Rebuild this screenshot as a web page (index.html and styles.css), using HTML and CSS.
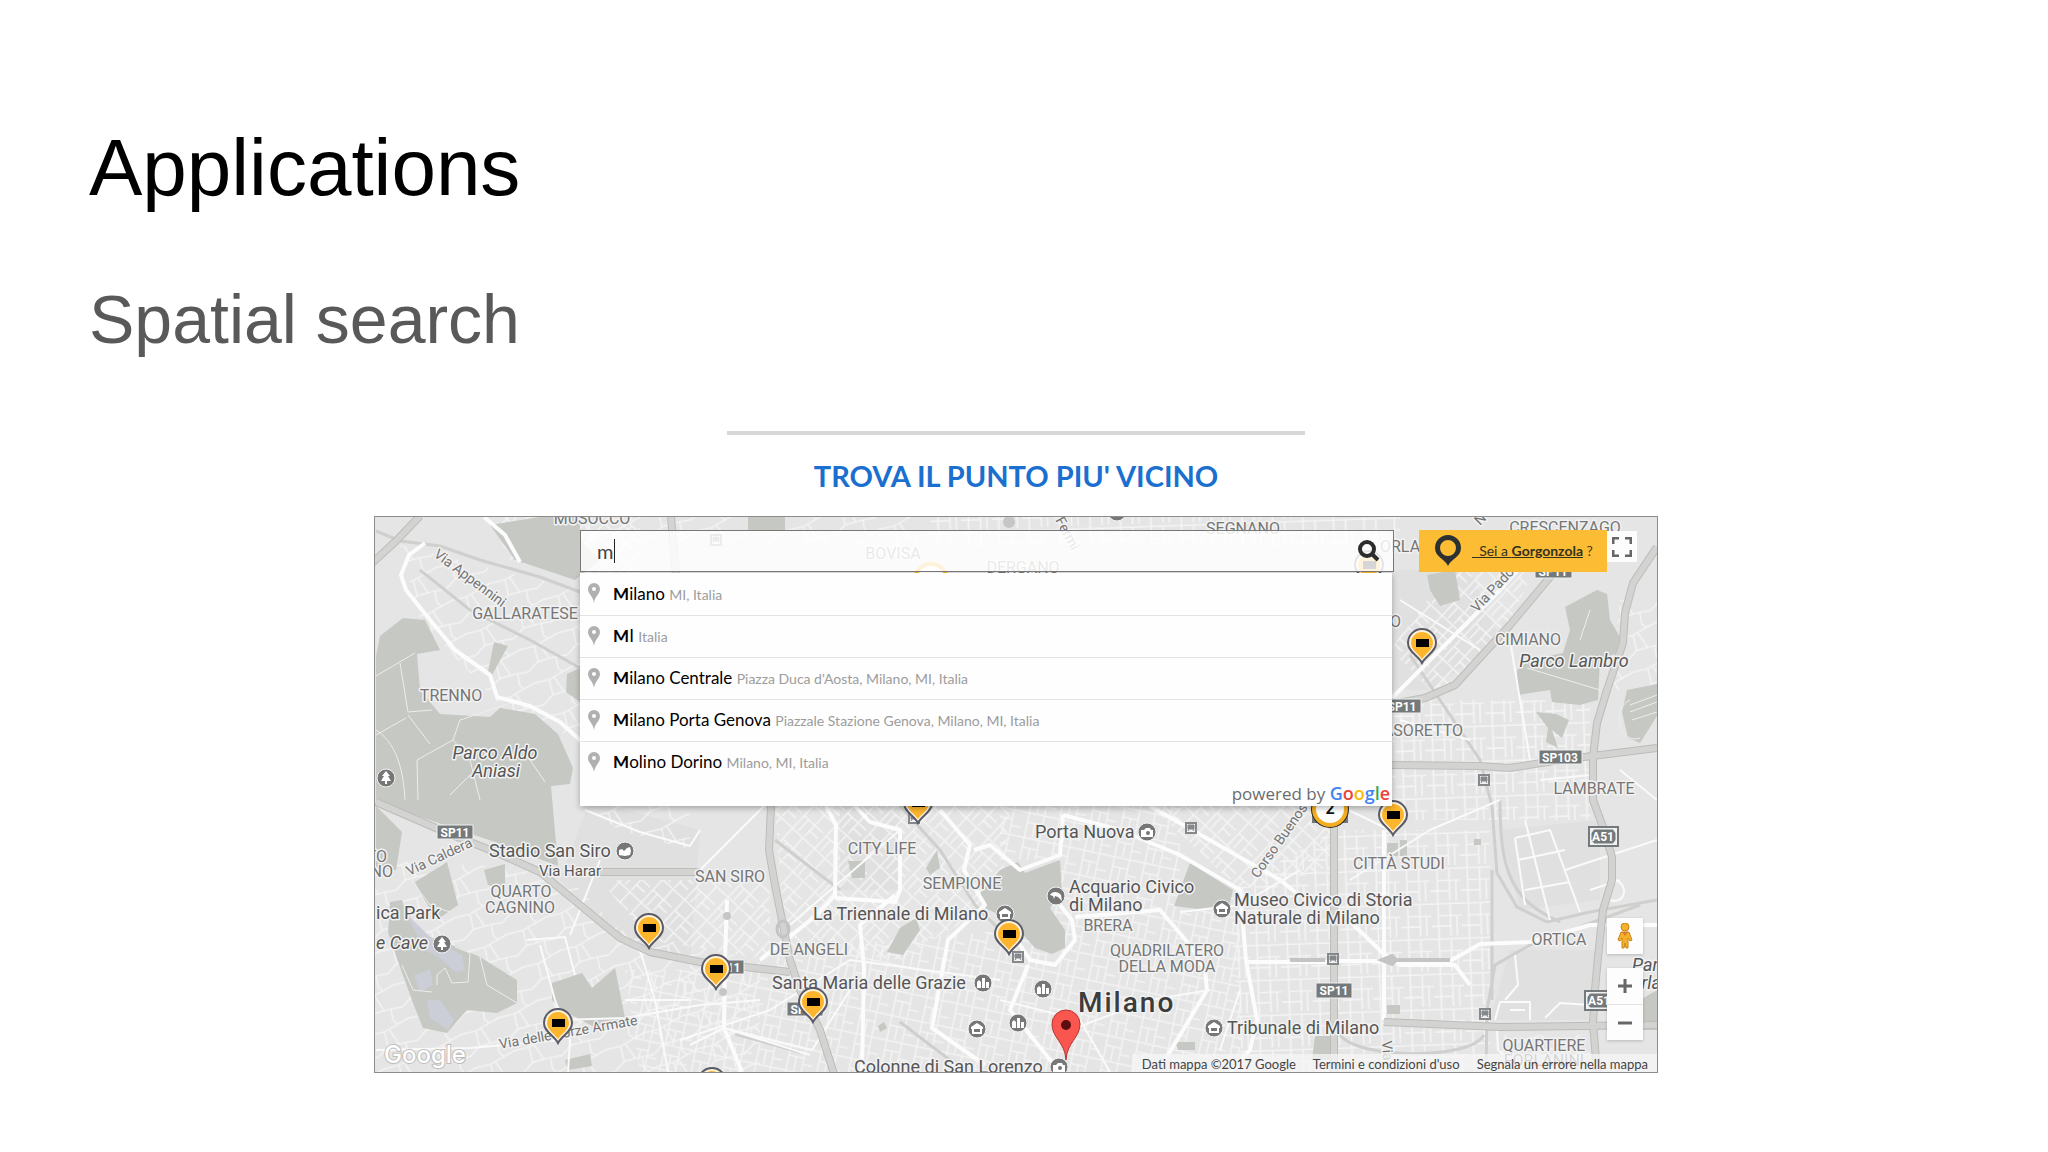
FILE: index.html
```html
<!DOCTYPE html>
<html lang="en">
<head>
<meta charset="utf-8">
<meta name="viewport" content="width=device-width, initial-scale=1">
<title>Applications – Spatial search</title>
<link rel="stylesheet" href="styles.css">
</head>
<body>
<main class="slide">
  <h1 class="title">Applications</h1>
  <h2 class="subtitle">Spatial search</h2>

  <section class="finder" lang="it">
    <hr class="rule">
    <h3 class="finder-title">TROVA IL PUNTO PIU' VICINO</h3>

    <div class="map">
      <svg class="map-canvas" viewBox="375 517 1282 555" preserveAspectRatio="xMidYMid slice" role="img" aria-label="Mappa di Milano">
        <defs>
          <pattern id="grid-a" width="44" height="36" patternUnits="userSpaceOnUse" patternTransform="rotate(12) scale(.7)">
            <path class="street" d="M0 2H44M8 0V36M8 16H30M30 2V36M30 25H44M19 16V36"/>
          </pattern>
          <pattern id="grid-b" width="40" height="42" patternUnits="userSpaceOnUse" patternTransform="rotate(43) scale(.75)">
            <path class="street" d="M0 3H40M6 0V42M6 22H40M25 3V42M14 22V42M25 32H40"/>
          </pattern>
          <pattern id="grid-c" width="38" height="44" patternUnits="userSpaceOnUse" patternTransform="rotate(-2) scale(.8)">
            <path class="street" d="M0 4H38M9 0V44M9 19H38M24 4V44M0 32H24M32 19V44"/>
          </pattern>
          <pattern id="grid-d" width="60" height="52" patternUnits="userSpaceOnUse" patternTransform="rotate(-24) scale(.7)">
            <path class="street" d="M0 6L22 10L60 6M22 10L18 32L0 40M18 32L44 36L60 40M44 36L40 52M40 0L44 8M30 10L34 34"/>
          </pattern>
          <g id="pin">
            <path class="pin-edge" d="M0 20C-4 12-14 9-14 0A14 14 0 0 1 14 0C14 9 4 12 0 20Z"/>
            <path class="pin-body" d="M0 16C-4 10-11 7-11 0A11 11 0 0 1 11 0C11 7 4 10 0 16Z"/>
            <path d="M-6-4H7V4H-6Z"/>
          </g>
          <g id="poi"><circle class="poi-disc" r="9"/></g>
          <g id="poi-camera"><use href="#poi"/><path class="poi-mark" d="M-6-2H-3L-1-4H3L4-2H6V5H-6Z"/><circle class="poi-hole" cx="1" cy="1" r="2"/></g>
          <g id="poi-museum"><use href="#poi"/><path class="poi-mark" d="M-6-2L0-6L6-2V0H5V5H-5V0H-6Z"/><path class="poi-hole" d="M-3 0H3V3H-3Z"/></g>
          <g id="poi-city"><use href="#poi"/><path class="poi-mark" d="M-6 5V-1L-4-3L-2-1V5ZM-1 5V-5H2V5ZM3 5V-1H6V5Z"/></g>
          <g id="poi-tree"><use href="#poi"/><path class="poi-mark" d="M0-7L4-2H2L5 3H1V6H-1V3H-5L-2-2H-4Z"/></g>
          <g id="poi-fish"><use href="#poi"/><path class="poi-mark" d="M-6-1C-4-5 2-5 5-1L6 5L2 1L-1 0L-2 3L-3 0Z"/></g>
          <g id="poi-stadium"><use href="#poi"/><path class="poi-mark" d="M-6 4V-1L-3-2L-1 0L2-3L5-4L6 0L5 4L0 5Z"/></g>
          <g id="rail"><path class="rail-box" d="M-5-5H5V5H-5Z"/><path class="rail-mark" d="M-3-3H3V1H-3ZM-3 3L-2 1M3 3L2 1"/></g>
        </defs>

        <path class="land" d="M375 517H1657V1072H375Z"/>

        <g class="blocks">
          <path d="M590 800L700 830L690 960L620 940L560 880Z"/>
          <path d="M1500 830L1600 820L1600 900L1520 910Z"/>
          <path d="M1510 950H1595V1020H1490Z"/>
          <path d="M840 807H900V890H840Z"/>
          <path d="M1380 570H1470L1500 640L1430 690H1380Z"/>
        </g>

        <!-- minor streets -->
        <path fill="url(#grid-d)" d="M400 545L580 590V740L500 705L420 620Z M375 860L560 870L620 930L760 960V1072H375Z M580 517H930V545H580Z"/>
        <path fill="url(#grid-b)" d="M490 517H640V590L560 575L510 560Z M600 880H770V960L650 940Z M775 806H1010L1000 900L900 960L785 950Z M1150 806H1330V870L1240 890Z M1390 650L1450 570L1540 560L1500 640L1440 700Z"/>
        <path fill="url(#grid-c)" d="M1230 890L1334 830H1490V1072H1240Z M1392 700H1590V820H1392Z M930 517H1400V545H930Z"/>
        <path fill="url(#grid-a)" d="M770 950L1010 930L1060 860L1180 806V1072H830Z M625 970H790L830 1072H640Z M1180 910H1240V1072H1180Z M1000 806H1180V860H1000Z"/>
        <path fill="url(#grid-d)" d="M1620 600H1657V690H1610Z M1500 1035H1590V1072H1500Z M580 806H690V850L620 830Z"/>

        <!-- parks -->
        <g class="park">
          <path d="M376 656L380 636L403 618L425 620L440 650L417 654L420 690L440 714L490 717L500 708L535 714L558 734L573 768L570 784L551 786L558 866L495 842L376 802Z"/>
          <path d="M376 806L402 832L396 870L376 868Z"/>
          <path d="M494 642L508 646L492 675L488 672Z"/>
          <path d="M567 674L580 668V702L566 692Z"/>
          <path d="M540 517H580V540L600 560L575 580L515 560L490 525Z"/>
          <path d="M484 870L505 864V890L488 885Z"/>
          <path d="M415 882L447 862L458 905L437 920L422 896Z"/>
          <path d="M390 902L402 900L407 917L430 937L457 947L480 957L517 980V1003L497 1013L467 1010L447 1033L423 1028L413 1003L400 967L388 932Z"/>
          <path d="M552 983L582 973L592 988L615 968L625 1018L600 1030L562 1010L552 1000Z"/>
          <path d="M565 1060L590 1054L592 1066L568 1070Z"/>
          <path d="M748 517H785V530H748Z"/>
          <path d="M848 861H865V878H852Z"/>
          <path d="M937 850L940 868L930 875L926 868Z"/>
          <path d="M916 918L920 930L903 955L887 952L900 928Z"/>
          <path d="M978 896L1000 870L1018 862L1025 873L1060 860L1062 893L1050 908L1065 930V948L1052 954L1035 948L1010 920L985 908Z"/>
          <path d="M1190 863L1233 890L1230 903L1205 910L1174 906Z"/>
          <path d="M878 1026L884 1022L887 1028L880 1032ZM1175 1042H1195V1050H1178ZM1315 1036H1336V1060H1312Z"/>
          <path d="M1387 843H1398V856H1387ZM1400 840H1407V856H1400ZM1474 839H1481V845H1474ZM1387 1005H1400V1014H1387Z"/>
          <path d="M1427 575L1455 570L1460 600L1440 606L1430 590Z"/>
          <path d="M1597 590L1607 594L1610 620L1620 637L1617 653L1600 660L1598 700L1580 705L1552 702L1550 690L1518 695L1517 670L1530 660L1563 653L1570 630L1565 607Z"/>
          <path d="M1536 712L1556 714L1569 720L1562 738L1552 730L1558 748L1546 742L1548 728Z"/>
          <path d="M1627 690L1657 684V716L1640 743L1628 738L1622 712Z"/>
          <path d="M1640 1000L1657 990V1030H1640Z"/>
        </g>
        <g class="water">
          <path d="M405 912L430 937L462 955L465 970L455 972L440 958L425 950Z"/>
          <path d="M414 975L430 970L433 985L420 992ZM427 1000L440 1000L454 1020L448 1030L430 1018Z"/>
        </g>
        <path class="trail" d="M376 676L403 660L415 653M400 663L408 712L432 710M406 718L376 735M408 715L430 744M418 800L417 760L453 740L460 720L520 700M453 740L470 760L480 800M376 730C400 745 404 780 405 800M530 760L545 782M450 795L470 775M402 868L430 905L450 912M455 947L470 953L468 982L452 983L445 968L437 975V985M480 957L487 985L517 1003M402 965L413 990L432 992M1590 610L1580 640M1527 668L1600 690"/>
        <path class="trail" d="M1630 705L1657 695M1630 712L1657 702M1632 720L1657 712M1630 700A16 20 0 0 0 1640 738"/>

        <!-- railways -->
        <g class="railway">
          <path d="M376 531L400 541L440 546L480 560L540 577L580 592"/>
          <path d="M420 570L470 610L530 640L580 668"/>
          <path d="M1492 806L1497 873L1517 907L1547 922L1590 912L1657 900"/>
          <path d="M1500 800C1500 870 1510 900 1560 922M1640 905L1530 945L1495 965L1487 1010L1486 1072"/>
          <path d="M1410 655L1440 700L1480 760L1492 806M1492 870V1000"/>
          <path d="M900 806L940 850L975 905L1010 940M775 840L840 890M1340 1035C1360 1060 1470 1060 1484 1035"/>
          <path d="M900 1022L930 1045L950 1060M735 1034L800 1052M1188 860L1235 888"/>
        </g>

        <!-- avenues -->
        <g class="avenue">
          <path d="M425 543L409 555L401 575L406 590L430 620L455 650L490 675L497 697L530 706L560 722L582 742"/>
          <path d="M484 517L505 535L520 562"/>
          <path d="M826 806L836 825L835 895L817 915L760 960"/>
          <path d="M835 898L895 902L900 890V830L870 822L855 806"/>
          <path d="M895 895L860 925L864 968L862 1072"/>
          <path d="M727 900L725 960L724 1028L742 1072"/>
          <path d="M940 810L970 845L964 870L985 905L948 940L932 1028L985 1065"/>
          <path d="M974 850L990 845L1020 870L1060 855L1063 815"/>
          <path d="M1010 930L1030 960L1055 965L1075 940L1072 920L1060 905"/>
          <path d="M1063 815L1120 830L1180 855L1240 890L1246 960L1257 1020L1250 1050L1230 1072"/>
          <path d="M1150 806L1280 880L1300 896"/>
          <path d="M1075 917L1160 910L1190 945L1205 970L1207 990L1165 1060"/>
          <path d="M1028 965L1010 1010L1060 1072"/>
          <path d="M1384 830V1020"/>
          <path d="M1248 962H1330M1338 961H1450L1480 944L1530 942L1590 925H1657"/>
          <path d="M1338 910L1385 955L1400 965L1455 965L1470 985"/>
          <path d="M1392 698L1440 650L1500 590L1540 545"/>
        </g>
        <g class="lane">
          <path d="M1350 880L1430 830L1500 800"/>
          <path d="M1565 870L1657 840M1525 820L1550 920M1515 838L1550 830L1580 912M1340 806L1390 830M1515 838L1525 905M1518 860L1565 850M1525 890L1570 882"/>
          <path d="M1495 1020L1500 1002H1530V1020M1510 1010H1525M1545 1018L1560 1003L1590 1005M1515 955L1518 985L1505 1000M1590 890L1620 880M1615 880C1630 885 1625 905 1610 900"/>
          <path d="M540 945L555 1000L570 1040L568 1072M527 940L565 937L575 975M640 950L655 1000L668 1072M600 860L570 935M560 1020L625 1018L700 1005L760 1000"/>
          <path d="M625 1000H690M376 1050L470 1048L560 1040M680 1040L770 1010L850 960L1000 980"/>
          <path d="M730 1030L810 1055M690 1045L724 1028L812 1050L850 990"/>
          <path d="M1497 1030L1498 1050L1510 1060"/>
          <path d="M585 810L640 832L690 846L700 830M700 870L770 800M790 925L900 830M1180 912L1240 905L1300 870"/>
          <path d="M1220 1050L1240 990M1070 1030L1150 1000L1210 990M1000 1000L1080 1020L1110 1072"/>
          <path d="M1620 770L1657 800M1540 780L1590 775M1400 720L1470 740M1510 640L1530 760M1400 600L1480 650"/>
        </g>
        <path class="plaza" d="M1395 960H1450M1382 960L1392 956L1396 960L1392 964ZM1290 960H1325"/>

        <!-- main roads -->
        <g class="road-edge">
          <path id="r1" d="M420 516L396 541L370 565"/>
          <path id="r2" d="M376 802L445 832L500 854L540 872L580 905L620 938L650 952L700 962L790 972"/>
          <path id="r3" d="M771 806L769 850L775 885L783 925L790 960L800 990L820 1030L834 1074"/>
          <path id="r4" d="M1657 547L1633 583L1625 613L1623 643L1607 690L1597 723L1593 757V800L1603 827L1612 857V880L1603 910L1598 957L1595 990L1593 1023L1597 1072"/>
          <path id="r5" d="M1580 545L1560 565L1510 625L1455 685L1425 698L1392 704"/>
          <path id="r6" d="M1392 765L1480 766L1510 768L1560 760L1657 748"/>
          <path id="r7" d="M1334 800V1072"/>
          <path id="r8" d="M1384 1022L1500 1027L1657 1025"/>
          <path id="r9" d="M590 872H700M671 517L676 575"/>
        </g>
        <g class="road">
          <use href="#r1"/><use href="#r2"/><use href="#r3"/><use href="#r4"/><use href="#r5"/><use href="#r6"/><use href="#r7"/><use href="#r8"/><use href="#r9"/>
        </g>
        <ellipse class="ring" cx="783" cy="929" rx="6" ry="8"/>
        <g class="knot"><circle cx="727" cy="916" r="4"/><circle cx="723" cy="992" r="4"/><circle cx="1009" cy="522" r="6"/></g>

        <!-- district names -->
        <g class="label district">
          <text x="592" y="524" text-anchor="middle">MUSOCCO</text>
          <text x="525" y="619" text-anchor="middle">GALLARATESE</text>
          <text x="451" y="701" text-anchor="middle">TRENNO</text>
          <text x="893" y="559" text-anchor="middle">BOVISA</text>
          <text x="1023" y="573" text-anchor="middle">DERGANO</text>
          <text x="1243" y="534" text-anchor="middle">SEGNANO</text>
          <text x="1565" y="533" text-anchor="middle">CRESCENZAGO</text>
          <text x="1380" y="552">ORLA</text>
          <text x="1390" y="627">O</text>
          <text x="1528" y="645" text-anchor="middle">CIMIANO</text>
          <text x="1463" y="736" text-anchor="end">CASORETTO</text>
          <text x="1594" y="794" text-anchor="middle">LAMBRATE</text>
          <text x="1399" y="869" text-anchor="middle">CITTÀ STUDI</text>
          <text x="1559" y="945" text-anchor="middle">ORTICA</text>
          <text x="1544" y="1051" text-anchor="middle">QUARTIERE</text>
          <text x="1544" y="1066" text-anchor="middle">FORLANINI</text>
          <text x="387" y="862" text-anchor="end">TO</text>
          <text x="393" y="877" text-anchor="end">NO</text>
          <text x="521" y="897" text-anchor="middle">QUARTO</text>
          <text x="520" y="913" text-anchor="middle">CAGNINO</text>
          <text x="730" y="882" text-anchor="middle">SAN SIRO</text>
          <text x="882" y="854" text-anchor="middle">CITY LIFE</text>
          <text x="962" y="889" text-anchor="middle">SEMPIONE</text>
          <text x="809" y="955" text-anchor="middle">DE ANGELI</text>
          <text x="1108" y="931" text-anchor="middle">BRERA</text>
          <text x="1167" y="956" text-anchor="middle">QUADRILATERO</text>
          <text x="1167" y="972" text-anchor="middle">DELLA MODA</text>
        </g>
        <g class="label street-name">
          <text transform="translate(433 556) rotate(37)">Via Appennini</text>
          <text transform="translate(409 876) rotate(-25)">Via Caldera</text>
          <text transform="translate(500 1049) rotate(-10)">Via delle Forze Armate</text>
          <text transform="translate(1477 613) rotate(-47)">Via Padova</text>
          <text transform="translate(1258 879) rotate(-55)">Corso Buenos Aires</text>
          <text transform="translate(1055 520) rotate(62)">Fermi</text>
          <text transform="translate(1382 1041) rotate(86)">Via</text>
          <text transform="translate(1480 526) rotate(-45)">N</text>
        </g>
        <g class="label place">
          <text x="489" y="857">Stadio San Siro</text>
          <text x="376" y="919">ica Park</text>
          <text class="natural" x="376" y="949">e Cave</text>
          <text x="813" y="920">La Triennale di Milano</text>
          <text x="772" y="989">Santa Maria delle Grazie</text>
          <text x="854" y="1073">Colonne di San Lorenzo</text>
          <text x="1035" y="838">Porta Nuova</text>
          <text x="1069" y="893">Acquario Civico</text>
          <text x="1069" y="911">di Milano</text>
          <text x="1234" y="906">Museo Civico di Storia</text>
          <text x="1234" y="924">Naturale di Milano</text>
          <text x="1227" y="1034">Tribunale di Milano</text>
          <text class="natural" x="495" y="759" text-anchor="middle">Parco Aldo</text>
          <text class="natural" x="496" y="777" text-anchor="middle">Aniasi</text>
          <text class="natural" x="1574" y="667" text-anchor="middle">Parco Lambro</text>
          <text class="natural" x="1632" y="971">Parco</text>
          <text class="natural" x="1622" y="989">Forlanini</text>
          <text class="small" x="539" y="876">Via Harar</text>
        </g>
        <text class="label city" x="1078" y="1012">Milano</text>

        <!-- road shields -->
        <g class="shield">
          <path d="M437 825H473V839H437ZM1387 699H1421V713H1387ZM1539 750H1582V764H1539ZM1535 564H1572V578H1535ZM1316 983H1352V998H1316ZM712 960H744V974H712ZM787 1002H823V1016H787Z"/>
          <path class="shield-motorway" d="M1589 827H1618V846H1589ZM1585 991H1614V1010H1585Z"/>
          <path d="M1594 829H1613L1616 833V840L1613 844H1594L1591 840V833ZM1590 993H1609L1612 997V1004L1609 1008H1590L1587 1004V997Z"/>
        </g>
        <g class="shield-text">
          <text x="455" y="837">SP11</text>
          <text x="1402" y="711">SP11</text>
          <text x="1560" y="762">SP103</text>
          <text x="1553" y="576">SP11</text>
          <text x="1334" y="995">SP11</text>
          <text x="726" y="972">SP11</text>
          <text x="805" y="1014">SP11</text>
          <text x="1603" y="841">A51</text>
          <text x="1599" y="1005">A51</text>
        </g>

        <!-- points of interest -->
        <use href="#poi-stadium" x="625" y="851"/>
        <use href="#poi-tree" x="386" y="778"/>
        <use href="#poi-tree" x="442" y="944"/>
        <use href="#poi-museum" x="1005" y="914"/>
        <use href="#poi-city" x="983" y="983"/>
        <use href="#poi-museum" x="977" y="1029"/>
        <use href="#poi-city" x="1018" y="1023"/>
        <use href="#poi-city" x="1043" y="989"/>
        <use href="#poi-camera" x="1059" y="1067"/>
        <use href="#poi-camera" x="1147" y="832"/>
        <use href="#poi-fish" x="1056" y="896"/>
        <use href="#poi-museum" x="1222" y="909"/>
        <use href="#poi-museum" x="1214" y="1028"/>
        <use href="#poi" x="1117" y="512"/>
        <use href="#rail" x="1191" y="828"/>
        <use href="#rail" x="1018" y="957"/>
        <use href="#rail" x="1333" y="959"/>
        <use href="#rail" x="1484" y="780"/>
        <use href="#rail" x="1485" y="1014"/>
        <use href="#rail" x="716" y="540"/>
        <use href="#rail" x="914" y="818"/>

        <!-- shop markers -->
        <circle class="cluster" cx="931" cy="580" r="16"/>
        <use href="#pin" x="1369" y="565"/>
        <use href="#pin" x="1422" y="643"/>
        <use href="#pin" x="649" y="928"/>
        <use href="#pin" x="558" y="1023"/>
        <use href="#pin" x="716" y="969"/>
        <use href="#pin" x="813" y="1002"/>
        <use href="#pin" x="918" y="803"/>
        <use href="#pin" x="1009" y="934"/>
        <use href="#pin" x="1393" y="815"/>
        <use href="#pin" x="712" y="1082"/>
        <path class="cluster-base" d="M1312 800H1348V823H1312Z"/>
        <circle class="cluster-edge" cx="1330" cy="809" r="19"/>
        <circle class="cluster" cx="1330" cy="809" r="16"/>
        <text class="cluster-count" x="1330" y="814">2</text>

        <!-- search location -->
        <path class="here" d="M1066 1060C1065 1042 1052 1038 1052 1024A14 14 0 0 1 1080 1024C1080 1038 1067 1042 1066 1060Z"/>
        <circle class="here-dot" cx="1066" cy="1025" r="5"/>

        <text class="watermark" x="384" y="1063">Google</text>
      </svg>

      <form class="search">
        <div class="search-box">
          <input class="search-input" type="text" value="m" aria-label="Cerca una località" autocomplete="off">
          <span class="caret"></span>
          <button class="search-button" type="button" aria-label="Cerca">
            <svg viewBox="0 0 22 22" width="22" height="22"><circle cx="9" cy="9" r="7"/><path d="M14 14L20 20"/></svg>
          </button>
        </div>
        <div class="suggestions">
          <ul class="suggestion-list">
            <li class="suggestion"><svg class="place-pin" viewBox="0 0 12 20"><path d="M6 20C5 13 0 11 0 6A6 6 0 0 1 12 6C12 11 7 13 6 20ZM6 4A2 2 0 0 0 6 8A2 2 0 0 0 6 4Z"/></svg><span><b>M</b>ilano <small>MI, Italia</small></span></li>
            <li class="suggestion"><svg class="place-pin" viewBox="0 0 12 20"><path d="M6 20C5 13 0 11 0 6A6 6 0 0 1 12 6C12 11 7 13 6 20ZM6 4A2 2 0 0 0 6 8A2 2 0 0 0 6 4Z"/></svg><span><b>M</b>I <small>Italia</small></span></li>
            <li class="suggestion"><svg class="place-pin" viewBox="0 0 12 20"><path d="M6 20C5 13 0 11 0 6A6 6 0 0 1 12 6C12 11 7 13 6 20ZM6 4A2 2 0 0 0 6 8A2 2 0 0 0 6 4Z"/></svg><span><b>M</b>ilano Centrale <small>Piazza Duca d'Aosta, Milano, MI, Italia</small></span></li>
            <li class="suggestion"><svg class="place-pin" viewBox="0 0 12 20"><path d="M6 20C5 13 0 11 0 6A6 6 0 0 1 12 6C12 11 7 13 6 20ZM6 4A2 2 0 0 0 6 8A2 2 0 0 0 6 4Z"/></svg><span><b>M</b>ilano Porta Genova <small>Piazzale Stazione Genova, Milano, MI, Italia</small></span></li>
            <li class="suggestion"><svg class="place-pin" viewBox="0 0 12 20"><path d="M6 20C5 13 0 11 0 6A6 6 0 0 1 12 6C12 11 7 13 6 20ZM6 4A2 2 0 0 0 6 8A2 2 0 0 0 6 4Z"/></svg><span><b>M</b>olino Dorino <small>Milano, MI, Italia</small></span></li>
          </ul>
          <div class="powered">powered by <span class="google"><i class="blue">G</i><i class="red">o</i><i class="yellow">o</i><i class="blue">g</i><i class="green">l</i><i class="red">e</i></span></div>
        </div>
      </form>

      <div class="locate">
        <svg class="locate-pin" viewBox="0 0 26 32" width="26" height="32"><path d="M13 31C10 24 0 22 0 13A13 13 0 0 1 26 13C26 22 16 24 13 31ZM13 5A8 8 0 0 0 13 21A8 8 0 0 0 13 5Z"/></svg>
        <span><a href="#">&nbsp;&nbsp;Sei a <b>Gorgonzola</b></a> ?</span>
      </div>
      <button class="control fullscreen" type="button" aria-label="Schermo intero">
        <svg viewBox="0 0 20 20" width="20" height="20"><path d="M1 7V1H7M13 1H19V7M19 13V19H13M7 19H1V13"/></svg>
      </button>

      <div class="controls">
        <button class="control pegman" type="button" aria-label="Street View">
          <svg viewBox="0 0 16 26" width="16" height="26"><circle cx="8" cy="4" r="4"/><path d="M4 9H12L15 17L13 18L11 15V25H9L8 20L7 25H5V15L3 18L1 17Z"/><path class="scarf" d="M5 9H11L8 13Z"/></svg>
        </button>
        <div class="zoom">
          <button class="control" type="button" aria-label="Zoom avanti"><svg viewBox="0 0 14 14" width="14" height="14"><path d="M7 0V14M0 7H14"/></svg></button>
          <button class="control" type="button" aria-label="Zoom indietro"><svg viewBox="0 0 14 14" width="14" height="14"><path d="M0 7H14"/></svg></button>
        </div>
      </div>

      <div class="attribution">
        <span>Dati mappa ©2017 Google</span>
        <a href="#">Termini e condizioni d'uso</a>
        <a href="#">Segnala un errore nella mappa</a>
      </div>
    </div>
  </section>
</main>
</body>
</html>
```
FILE: styles.css
```css
* { box-sizing: border-box; }
body { margin: 0; background: #fff; font-family: Lato, sans-serif; }
.slide { padding: 122px 105px 78px 89px; }
.title, .subtitle { margin: 0; font-family: "Liberation Sans", Arial, sans-serif; font-weight: 400; }
.title { font-size: 80px; line-height: 92px; color: #000; }
.subtitle { margin-top: 65px; font-size: 68px; line-height: 80px; color: #595959; }

.finder { width: 100%; max-width: 1284px; margin: 72px auto 0; }
.rule { width: 45%; height: 4px; margin: 0 auto; border: 0; background: #d8d8d8; }
.finder-title { margin: 23px 0 22px; font-size: 29px; line-height: 36px; font-weight: 700; text-align: center; color: #1a6fcf; }

/* map */
.map { position: relative; aspect-ratio: 1284 / 557; border: 1px solid #8c8c8c; overflow: hidden; }
.map-canvas { display: block; width: 100%; height: 100%; }
.land { fill: #e5e5e5; }
.blocks { fill: #e0e0e1; }
.street { fill: none; stroke: #f4f4f4; stroke-width: 2; }
.park { fill: #c5c8c3; }
.water { fill: #cbced6; }
.trail { fill: none; stroke: #eeeeec; stroke-width: 1; }
.railway { fill: none; stroke: #cfcfce; stroke-width: 3; }
.avenue { fill: none; stroke: #fcfcfc; stroke-width: 4; stroke-linejoin: round; }
.lane { fill: none; stroke: #fafafa; stroke-width: 2; stroke-linejoin: round; }
.plaza { fill: #c4c4c4; stroke: #c4c4c4; stroke-width: 4; }
.road-edge { fill: none; stroke: #bcbdba; stroke-width: 8; stroke-linejoin: round; }
.road { fill: none; }
.road use { stroke: #d3d4d1; stroke-width: 6; }
.ring { fill: none; stroke: #c4c5c2; stroke-width: 3; }
.knot { fill: #c6c6c5; }

.label { font-family: Roboto, sans-serif; paint-order: stroke; stroke: #f2f2f2; stroke-width: 3px; stroke-linejoin: round; }
.district { font-size: 16px; fill: #767676; }
.street-name { font-size: 14px; fill: #747474; }
.place { font-size: 18px; fill: #565656; }
.natural { font-style: italic; }
.small { font-size: 15px; }
.city { font-size: 28px; font-weight: 500; letter-spacing: 2px; fill: #3c3c3c; }
.shield { fill: #74797c; stroke: #f0f0f0; stroke-width: 1; }
.shield-motorway { fill: #f2f2f2; stroke: #74797c; stroke-width: 2; }
.shield-text { font: 700 12px Roboto, sans-serif; fill: #fff; text-anchor: middle; }
.poi-disc { fill: #777; stroke: #f4f4f4; stroke-width: 1; }
.poi-mark { fill: #fff; }
.poi-hole { fill: #777; }
.rail-box { fill: #f2f2f2; stroke: #85898b; stroke-width: 2; }
.rail-mark { fill: #85898b; stroke: #85898b; }
.pin-edge { fill: #fff4da; stroke: #5a5a68; stroke-width: 2; }
.pin-body { fill: #fcb52c; }
.cluster { fill: #fff; stroke: #f5ae22; stroke-width: 4; }
.cluster-base { fill: #73777a; }
.cluster-edge { fill: #262626; }
.cluster-count { font: 700 16px Roboto, sans-serif; text-anchor: middle; fill: #111; }
.here { fill: #f9564f; stroke: #b53530; stroke-width: 1; }
.here-dot { fill: #5c0d0d; }
.watermark { font: 500 24px Inter, sans-serif; fill: #fff; stroke: #bdbdbd; stroke-width: 2px; paint-order: stroke; }

/* search */
.search { position: absolute; top: 13px; left: 16%; width: 814px; margin: 0; }
.search-box { position: relative; display: flex; align-items: center; height: 42px; border: 1px solid #777; background: rgba(255, 255, 255, .84); }
.search-input { flex: 1; min-width: 0; height: 40px; padding: 0 16px; border: 0; outline: 0; background: none; font: 20px Lato, sans-serif; color: #444; }
.caret { position: absolute; left: 33px; top: 8px; width: 1px; height: 24px; background: #222; }
.search-button { display: flex; margin-right: 13px; padding: 0; border: 0; background: none; }
.search-button svg { fill: none; stroke: #2c2c2c; stroke-width: 4; }
.suggestions { width: 812px; margin-top: 1px; background: #fefefe; box-shadow: 0 2px 6px rgba(0, 0, 0, .3); }
.suggestion-list { margin: 0; padding: 0; list-style: none; }
.suggestion { display: flex; align-items: center; gap: 13px; height: 42px; padding: 0 0 2px 8px; font-size: 17px; color: #000; }
.suggestion + .suggestion { border-top: 1px solid #e2e2e2; }
.suggestion small { font-size: 14px; color: #9c9c9c; }
.place-pin { width: 12px; height: 20px; fill: #b0b0b0; fill-rule: evenodd; }
.powered { height: 23px; padding-right: 2px; font: 17px/20px "Open Sans", sans-serif; text-align: right; color: #6c6c6c; }
.google { font-size: 18px; font-weight: 600; }
.google i { font-style: normal; }
.blue { color: #4285f4; }
.red { color: #ea4335; }
.yellow { color: #fbbc05; }
.green { color: #34a853; }

/* overlays */
.locate { position: absolute; top: 13px; right: 50px; display: flex; align-items: center; gap: 11px; width: 188px; height: 42px; padding: 0 0 1px 16px; background: #fcbc34; font-size: 14px; color: #4a3a14; white-space: nowrap; }
.locate a { color: #33301f; }
.locate-pin { fill: #2b3133; fill-rule: evenodd; }
.control { display: flex; align-items: center; justify-content: center; width: 36px; height: 36px; padding: 0; border: 0; background: #fdfdfd; }
.control svg { fill: none; stroke: #666; stroke-width: 3; }
.fullscreen { position: absolute; top: 14px; right: 20px; width: 30px; height: 31px; }
.controls { position: absolute; right: 14px; bottom: 32px; display: flex; flex-direction: column; gap: 14px; }
.pegman { box-shadow: 0 1px 3px rgba(0, 0, 0, .2); }
.pegman svg { fill: #f3b12c; stroke: #c98615; stroke-width: 1; }
.pegman .scarf { fill: #e5762b; stroke: none; }
.zoom { background: #fdfdfd; box-shadow: 0 1px 3px rgba(0, 0, 0, .2); }
.zoom .control + .control { border-top: 1px solid #e3e3e3; }
.attribution { position: absolute; right: 0; bottom: 0; display: flex; gap: 17px; padding: 2px 9px 0 10px; background: rgba(245, 245, 245, .75); font-size: 13px; line-height: 16px; color: #444; }
.attribution a { color: #444; text-decoration: none; }
```
